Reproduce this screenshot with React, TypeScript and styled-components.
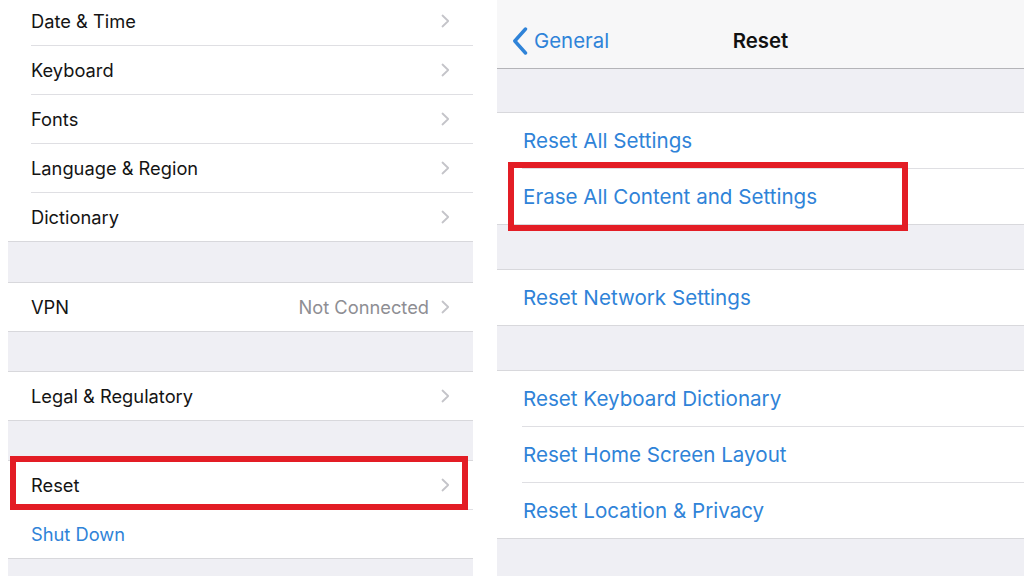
import React from 'react';
import styled, { createGlobalStyle } from 'styled-components';

const GlobalStyle = createGlobalStyle`
  html, body { margin: 0; padding: 0; background: #ffffff; }
  body {
    font-family: Inter, "Liberation Sans", Arial, sans-serif;
    -webkit-font-smoothing: antialiased;
  }
`;

const Screen = styled.div`
  width: 1024px;
  height: 576px;
  overflow: hidden;
  display: flex;
  background: #ffffff;
`;

const Pane = styled.div<{ $side: 'left' | 'right' }>`
  display: flex;
  flex-direction: column;
  overflow: hidden;
  background: #efeff4;
  ${(p) => (p.$side === 'left' ? 'width: 465px; margin-left: 8px;' : 'flex: 1; margin-left: 24px;')}
`;

const Group = styled.div<{ $cut?: boolean }>`
  flex-shrink: 0;
  background: #ffffff;
  border-top: ${(p) => (p.$cut ? 'none' : '1px solid #d8d8dc')};
  border-bottom: 1px solid #d8d8dc;
  margin-top: ${(p) => (p.$cut ? '-3px' : '0')};
`;

const Gap = styled.div<{ $h: number }>`
  flex-shrink: 0;
  height: ${(p) => p.$h}px;
`;

const Row = styled.div<{ $big?: boolean }>`
  position: relative;
  display: flex;
  padding-left: ${(p) => (p.$big ? '25px' : '23px')};
`;

const RowInner = styled.div<{ $big?: boolean; $last?: boolean }>`
  flex: 1;
  display: flex;
  align-items: center;
  height: ${(p) => (p.$big ? '55px' : '48px')};
  padding-right: 23px;
  padding-left: ${(p) => (p.$big ? '1px' : '0')};
  border-bottom: ${(p) => (p.$last ? 'none' : '1px solid #dfdfe3')};
`;

const Label = styled.span<{ $tone?: 'dark' | 'blue'; $big?: boolean }>`
  flex: 1;
  font-size: ${(p) => (p.$big ? '20.6px' : '18.3px')};
  color: ${(p) => (p.$tone === 'blue' ? '#2f83d8' : '#141414')};
  white-space: nowrap;
`;

const Detail = styled.span`
  font-size: 18.3px;
  color: #8e8e93;
  margin-right: 12px;
  white-space: nowrap;
`;

const Highlight = styled.div<{ $top: number; $bottom: number; $left: number; $width?: number; $right?: number }>`
  position: absolute;
  z-index: 2;
  top: ${(p) => p.$top}px;
  bottom: ${(p) => p.$bottom}px;
  left: ${(p) => p.$left}px;
  ${(p) => (p.$width !== undefined ? `width: ${p.$width}px;` : `right: ${p.$right}px;`)}
  border: 6px solid #e31d25;
  box-sizing: border-box;
  pointer-events: none;
`;

const NavBar = styled.div`
  flex-shrink: 0;
  height: 69px;
  box-sizing: border-box;
  padding-top: 13px;
  background: #f7f7f8;
  border-bottom: 1px solid #b4b4b8;
  display: grid;
  grid-template-columns: 1fr auto 1fr;
  align-items: center;
`;

const BackButton = styled.div`
  display: flex;
  align-items: center;
  gap: 6px;
  padding-left: 15px;
  color: #2f83d8;
  font-size: 20.4px;
`;

const Title = styled.div`
  font-size: 20.4px;
  font-weight: 600;
  color: #111111;
`;

const Chevron = () => (
  <svg width="9" height="14" viewBox="0 0 9 14" fill="none">
    <path d="M1.5 1.5 L7.2 7 L1.5 12.5" stroke="#c4c4c9" strokeWidth="1.8" strokeLinecap="round" strokeLinejoin="round" />
  </svg>
);

const BackChevron = () => (
  <svg width="16" height="28" viewBox="0 0 16 28" fill="none">
    <path d="M13.5 2 L2.8 14 L13.5 26" stroke="#2f83d8" strokeWidth="3.4" strokeLinecap="round" strokeLinejoin="round" />
  </svg>
);

type LeftItem = { label: string; detail?: string; tone?: 'dark' | 'blue'; chevron?: boolean; mark?: boolean };

const LeftGroup: React.FC<{ items: LeftItem[]; cut?: boolean }> = ({ items, cut }) => (
  <Group $cut={cut}>
    {items.map((it, i) => (
      <Row key={it.label}>
        <RowInner $last={i === items.length - 1}>
          <Label $tone={it.tone}>{it.label}</Label>
          {it.detail && <Detail>{it.detail}</Detail>}
          {it.chevron !== false && <Chevron />}
        </RowInner>
        {it.mark && <Highlight $top={-5} $bottom={0} $left={2} $right={5} />}
      </Row>
    ))}
  </Group>
);

type RightItem = { label: string; mark?: boolean };

const RightGroup: React.FC<{ items: RightItem[] }> = ({ items }) => (
  <Group>
    {items.map((it, i) => (
      <Row key={it.label} $big>
        <RowInner $big $last={i === items.length - 1}>
          <Label $big $tone="blue">{it.label}</Label>
        </RowInner>
        {it.mark && <Highlight $top={-7} $bottom={-7} $left={11} $width={400} />}
      </Row>
    ))}
  </Group>
);

export default function App() {
  return (
    <>
      <GlobalStyle />
      <Screen>
        <Pane $side="left">
          <LeftGroup
            cut
            items={[
              { label: 'Date & Time' },
              { label: 'Keyboard' },
              { label: 'Fonts' },
              { label: 'Language & Region' },
              { label: 'Dictionary' },
            ]}
          />
          <Gap $h={40} />
          <LeftGroup items={[{ label: 'VPN', detail: 'Not Connected' }]} />
          <Gap $h={39} />
          <LeftGroup items={[{ label: 'Legal & Regulatory' }]} />
          <Gap $h={39} />
          <LeftGroup
            items={[
              { label: 'Reset', mark: true },
              { label: 'Shut Down', tone: 'blue', chevron: false },
            ]}
          />
        </Pane>
        <Pane $side="right">
          <NavBar>
            <BackButton>
              <BackChevron />
              <span>General</span>
            </BackButton>
            <Title>Reset</Title>
            <div />
          </NavBar>
          <Gap $h={43} />
          <RightGroup items={[{ label: 'Reset All Settings' }, { label: 'Erase All Content and Settings', mark: true }]} />
          <Gap $h={44} />
          <RightGroup items={[{ label: 'Reset Network Settings' }]} />
          <Gap $h={44} />
          <RightGroup
            items={[
              { label: 'Reset Keyboard Dictionary' },
              { label: 'Reset Home Screen Layout' },
              { label: 'Reset Location & Privacy' },
            ]}
          />
        </Pane>
      </Screen>
    </>
  );
}
